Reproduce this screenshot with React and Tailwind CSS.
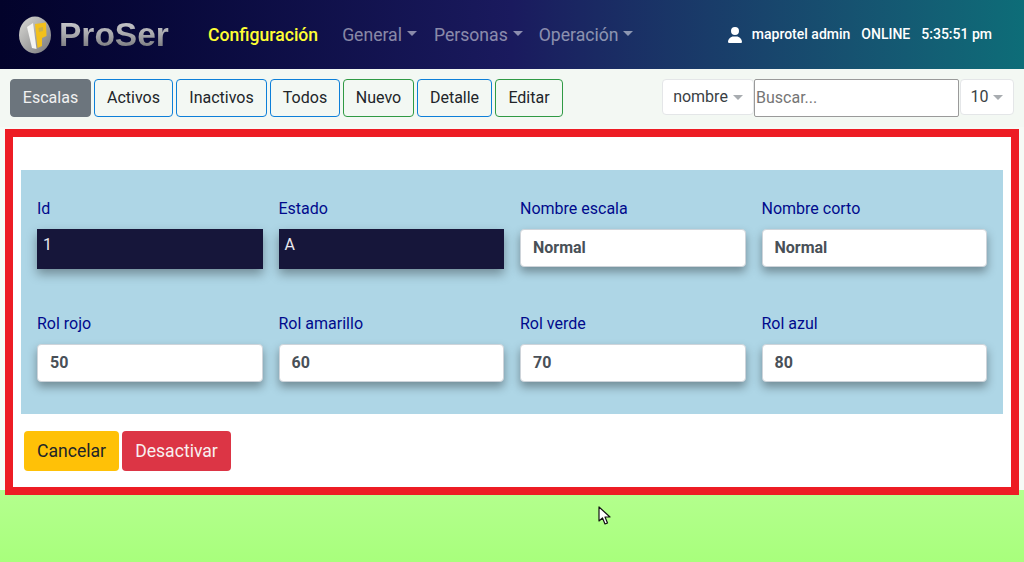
import React from "react";

function Logo() {
  return (
    <div className="flex items-center ml-[18px] w-[190px] shrink-0">
      <svg width="34" height="38" viewBox="0 0 34 38" className="shrink-0">
        <defs>
          <linearGradient id="lg" x1="0" y1="0" x2="1" y2="1">
            <stop offset="0" stopColor="#dadad6" />
            <stop offset="1" stopColor="#77777a" />
          </linearGradient>
        </defs>
        <ellipse cx="17" cy="19" rx="16" ry="18.5" fill="url(#lg)" />
        <path d="M9 11 L15 7 L18.5 33 L14 32 Z" fill="#f4f4f2" />
        <path d="M17 8 L28 6.5 L28.5 20 L24 22 L24 30 L19.5 32 Z" fill="#f2c01c" />
        <path d="M20.5 12 L25 11 L25 15 L21 16 Z" fill="#c9b04a" />
      </svg>
      <span className="ml-[7px] text-[33.5px] leading-none font-bold font-['Liberation_Sans',sans-serif] bg-gradient-to-b from-[#d0d0d4] via-[#a8a8ac] to-[#707074] bg-clip-text text-transparent">
        ProSer
      </span>
    </div>
  );
}

function Caret({ cls }) {
  return <span className={"inline-block ml-[5px] mb-[3px] border-x-[5px] border-t-[5px] border-x-transparent " + cls} />;
}

function NavItem({ label, cls }) {
  return (
    <span className={"flex items-center text-[rgba(255,255,255,0.5)] text-[17.6px] font-normal " + cls}>
      {label}
      <Caret cls="border-t-[rgba(255,255,255,0.5)]" />
    </span>
  );
}

function ToolButton({ children, cls }) {
  return (
    <button className={"h-[38px] rounded-[4px] border text-[16px] text-[#212529] " + cls}>
      {children}
    </button>
  );
}

function Field({ label, value, dark }) {
  return (
    <div className="flex flex-col pt-[1px]">
      <label className="text-[16px] leading-[24px] text-[#000a8c] h-[24px] mb-[8px]">{label}</label>
      {dark ? (
        <div className="h-[40px] bg-[#16163a] text-[#e8e8ee] text-[16px] leading-[32px] pl-[6px] shadow-[0_5px_10px_rgba(0,0,0,0.35)]">
          {value}
        </div>
      ) : (
        <div className="h-[38px] bg-white rounded-[4px] border border-[#ced4da] text-[#495057] font-bold text-[16px] leading-[36px] pl-[12px] shadow-[0_5px_10px_rgba(0,0,0,0.35)]">
          {value}
        </div>
      )}
    </div>
  );
}

export default function App() {
  return (
    <div className="relative h-[562px] w-[1024px] overflow-hidden flex flex-col font-['Roboto',sans-serif]">
      <header className="h-[69px] shrink-0 flex items-center bg-gradient-to-r from-[#03032b] via-[#1a1a5e] to-[#0d6d78]">
        <Logo />
        <div className="flex items-center pt-[1px]">
          <span className="text-[#ffff33] text-[17.6px] font-medium">Configuración</span>
          <NavItem label="General" cls="ml-[24px]" />
          <NavItem label="Personas" cls="ml-[17px]" />
          <NavItem label="Operación" cls="ml-[16px]" />
        </div>
        <div className="ml-auto mr-[32px] flex items-center text-white text-[14px] font-medium">
          <svg width="14" height="16" viewBox="0 0 448 512" fill="white" className="mr-[10px]">
            <path d="M224 256A128 128 0 1 0 224 0a128 128 0 1 0 0 256zm-45.7 48C79.8 304 0 383.8 0 482.3C0 498.7 13.3 512 29.7 512h388.6c16.4 0 29.7-13.3 29.7-29.7C448 383.8 368.2 304 269.7 304h-91.4z" />
          </svg>
          <span>maprotel admin</span>
          <span className="ml-[11px]">ONLINE</span>
          <span className="ml-[11px]">5:35:51 pm</span>
        </div>
      </header>

      <div className="h-[58px] shrink-0 bg-[#f3f8f3] flex items-start pt-[10px] pl-[10px]">
        <div className="flex gap-[3px]">
          <ToolButton cls="w-[81px] bg-[#6c757d] border-[#6c757d] !text-[#f1f1f1]">Escalas</ToolButton>
          <ToolButton cls="w-[79px] border-[#0d7fd8]">Activos</ToolButton>
          <ToolButton cls="w-[91px] border-[#0d7fd8]">Inactivos</ToolButton>
          <ToolButton cls="w-[70px] border-[#0d7fd8]">Todos</ToolButton>
          <ToolButton cls="w-[71px] border-[#2f9a44]">Nuevo</ToolButton>
          <ToolButton cls="w-[75px] border-[#0d7fd8]">Detalle</ToolButton>
          <ToolButton cls="w-[68px] border-[#2f9a44]">Editar</ToolButton>
        </div>
        <div className="ml-[99px] flex items-start">
          <div className="w-[92px] h-[36px] bg-white rounded-[4px] border border-[#e4e6e8] flex items-center justify-center text-[16px] text-[#3a3f44]">
            nombre
            <Caret cls="border-t-[#a8acb0] !mb-0" />
          </div>
          <div className="w-[205px] h-[38px] bg-white border border-[#9a9a9a] rounded-[2px] flex items-center pl-[1px] text-[16px] text-[#757575]">
            Buscar...
          </div>
          <div className="w-[54px] ml-[1px] h-[36px] bg-white rounded-[4px] border border-[#e4e6e8] flex items-center justify-center text-[16px] text-[#3a3f44]">
            10
            <Caret cls="border-t-[#a8acb0] !mb-0" />
          </div>
        </div>
      </div>

      <div className="px-[5px] h-[363px] shrink-0 bg-[#f6faf6] flex flex-col relative z-10">
        <main className="mt-[2px] h-[366px] shrink-0 border-[8px] border-[#ed1c24] bg-white px-[8px] pt-[33px] flex flex-col">
          <section className="h-[244px] shrink-0 bg-[#aed6e6] px-[16px] pt-[26px] grid grid-cols-4 gap-x-[16px] content-start">
            <div className="h-[115px]"><Field label="Id" value="1" dark /></div>
            <div className="h-[115px]"><Field label="Estado" value="A" dark /></div>
            <div className="h-[115px]"><Field label="Nombre escala" value="Normal" /></div>
            <div className="h-[115px]"><Field label="Nombre corto" value="Normal" /></div>
            <Field label="Rol rojo" value="50" />
            <Field label="Rol amarillo" value="60" />
            <Field label="Rol verde" value="70" />
            <Field label="Rol azul" value="80" />
          </section>
          <div className="flex gap-[3px] mt-[17px] ml-[3px]">
            <button className="w-[95px] h-[40px] rounded-[4px] bg-[#ffc107] text-[#212529] text-[17.6px]">Cancelar</button>
            <button className="w-[109px] h-[40px] rounded-[4px] bg-[#dc3545] text-[#f8f0f0] text-[17.6px]">Desactivar</button>
          </div>
        </main>
      </div>

      <div className="flex-1 bg-gradient-to-b from-[#b4ff8e] to-[#a8ff7c]" />

      <svg width="14" height="20" viewBox="0 0 14 20" className="absolute left-[598px] top-[506px] z-20">
        <path d="M1 1 L1 15 L4.5 12 L7 18 L9.5 17 L7 11 L12 11 Z" fill="#fff" stroke="#111" strokeWidth="1.2" strokeLinejoin="round" />
      </svg>
    </div>
  );
}
